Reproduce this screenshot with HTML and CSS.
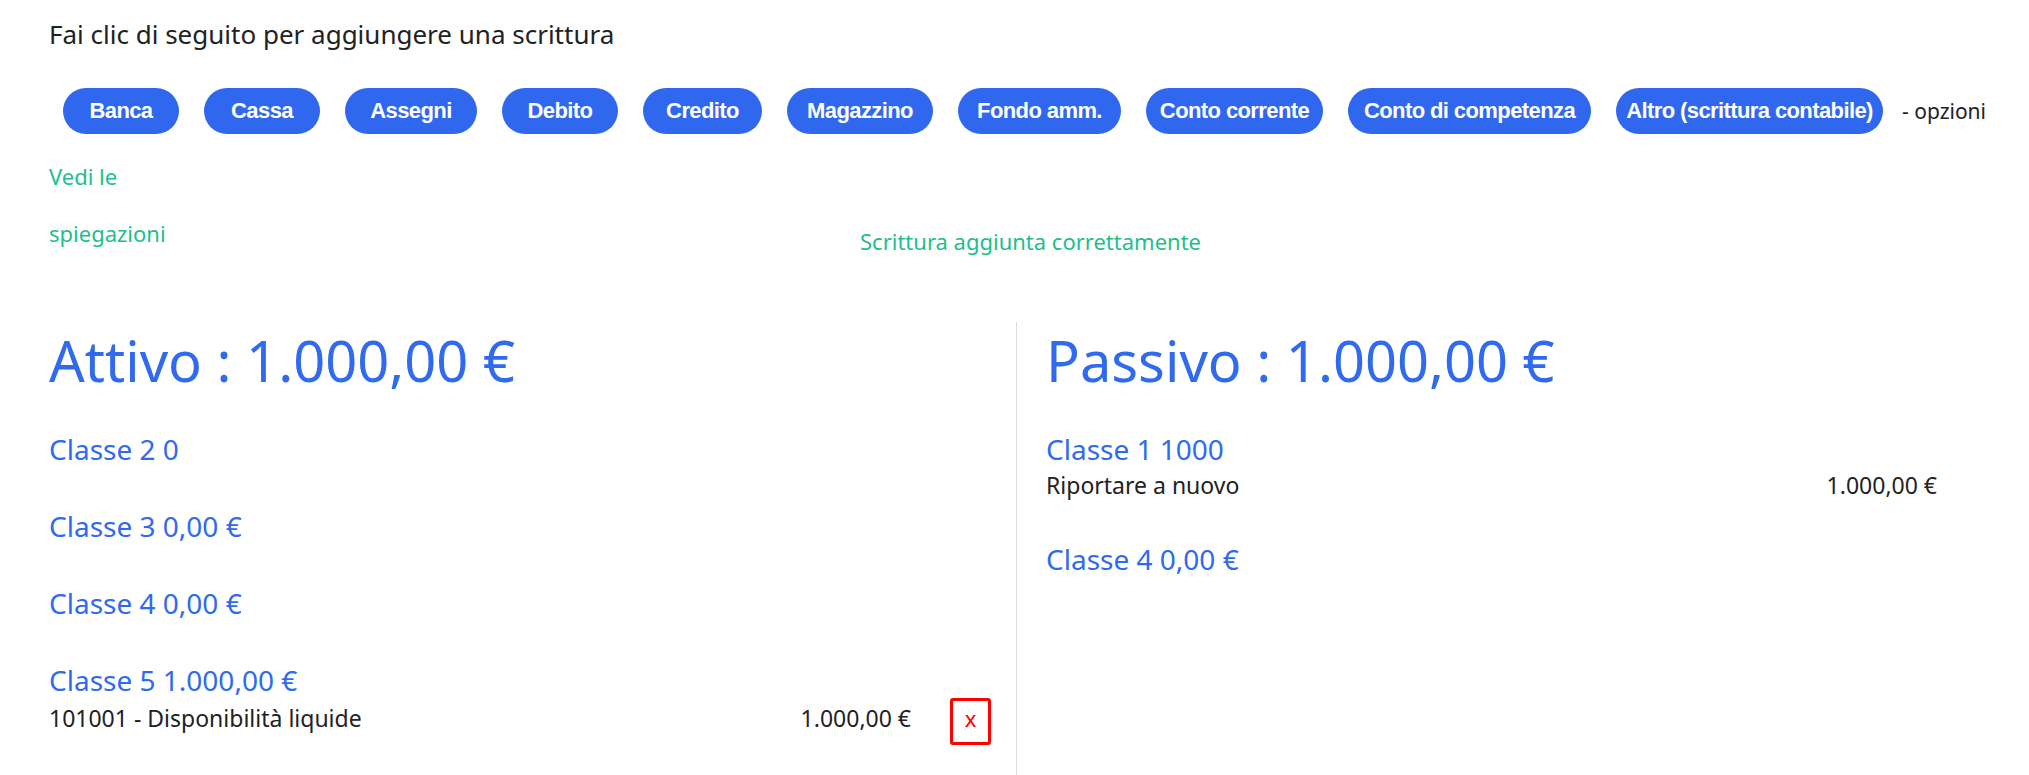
FILE: index.html
```html
<!DOCTYPE html>
<html lang="it">
<head>
<meta charset="utf-8">
<title>Scritture contabili</title>
<link rel="stylesheet" href="styles.css">
</head>
<body>
<div class="page">
  <p class="intro">Fai clic di seguito per aggiungere una scrittura</p>

  <div class="entry-types">
    <button class="entry-btn btn-banca">Banca</button>
    <button class="entry-btn btn-cassa">Cassa</button>
    <button class="entry-btn btn-assegni">Assegni</button>
    <button class="entry-btn btn-debito">Debito</button>
    <button class="entry-btn btn-credito">Credito</button>
    <button class="entry-btn btn-magazzino">Magazzino</button>
    <button class="entry-btn btn-fondo">Fondo amm.</button>
    <button class="entry-btn btn-conto">Conto corrente</button>
    <button class="entry-btn btn-competenza">Conto di competenza</button>
    <button class="entry-btn btn-altro">Altro (scrittura contabile)</button>
    <span class="options">- opzioni</span>
  </div>

  <div class="notice-row">
    <a class="help-link" href="#">Vedi le spiegazioni</a>
    <p class="success">Scrittura aggiunta correttamente</p>
  </div>

  <div class="balance">
    <section class="side side-assets">
      <h2 class="side-title">Attivo : 1.000,00 €</h2>
      <div class="class-block">
        <h4 class="class-title">Classe 2 0</h4>
      </div>
      <div class="class-block">
        <h4 class="class-title">Classe 3 0,00 €</h4>
      </div>
      <div class="class-block">
        <h4 class="class-title">Classe 4 0,00 €</h4>
      </div>
      <div class="class-block">
        <h4 class="class-title">Classe 5 1.000,00 €</h4>
        <div class="line">
          <span class="line-name">101001 - Disponibilità liquide</span>
          <span class="line-amount">1.000,00 €</span>
          <button class="remove-btn">x</button>
        </div>
      </div>
    </section>

    <section class="side side-liabilities">
      <h2 class="side-title">Passivo : 1.000,00 €</h2>
      <div class="class-block">
        <h4 class="class-title">Classe 1 1000</h4>
        <div class="line">
          <span class="line-name">Riportare a nuovo</span>
          <span class="line-amount">1.000,00 €</span>
        </div>
      </div>
      <div class="class-block">
        <h4 class="class-title">Classe 4 0,00 €</h4>
      </div>
    </section>
  </div>
</div>
</body>
</html>
```

FILE: styles.css
```css
html, body {
  margin: 0;
  padding: 0;
  background: #ffffff;
}

body {
  font-family: "Noto Sans", "Open Sans", sans-serif;
  color: #222222;
  overflow: hidden;
}

.page {
  padding: 17px 0 0 49px;
}

.intro {
  margin: 0;
  font-size: 26px;
  line-height: 34px;
  color: #222222;
}

/* entry type buttons */
.entry-types {
  display: flex;
  align-items: center;
  gap: 25px;
  margin-top: 37px;
  padding-left: 14px;
}

.entry-btn {
  flex: none;
  display: inline-flex;
  align-items: center;
  justify-content: center;
  height: 46px;
  padding: 0;
  border: none;
  border-radius: 23px;
  background: #2f68ef;
  color: #ffffff;
  font-family: "Liberation Sans", Arial, sans-serif;
  font-weight: bold;
  font-size: 22px;
  letter-spacing: -0.6px;
  white-space: nowrap;
  cursor: pointer;
}

.btn-banca { width: 116px; }
.btn-cassa { width: 116px; }
.btn-assegni { width: 132px; }
.btn-debito { width: 116px; }
.btn-credito { width: 119px; }
.btn-magazzino { width: 146px; }
.btn-fondo { width: 163px; }
.btn-conto { width: 177px; }
.btn-competenza { width: 243px; }
.btn-altro { width: 267px; }

.options {
  margin-left: -6px;
  font-size: 21px;
  color: #222222;
  white-space: nowrap;
}

/* notice row */
.notice-row {
  display: flex;
  align-items: flex-end;
  margin-top: 14px;
}

.help-link {
  flex: none;
  width: 130px;
  font-size: 22px;
  line-height: 57px;
  color: #1ebe8c;
  text-decoration: none;
}

.success {
  margin: 0 0 6px 681px;
  font-size: 22px;
  line-height: 30px;
  color: #1ebe8c;
  white-space: nowrap;
}

/* balance sheet */
.balance {
  display: flex;
  margin-top: 60px;
  min-height: 453px;
}

.side {
  box-sizing: border-box;
}

.side-assets {
  flex: none;
  width: 967px;
  padding-right: 25px;
}

.side-liabilities {
  flex: 1;
  border-left: 1px solid #dcdcdc;
  padding-left: 29px;
  padding-right: 92px;
}

.side-title {
  margin: 5px 0 39px;
  font-size: 56px;
  line-height: 66px;
  font-weight: normal;
  color: #2f6aef;
  white-space: nowrap;
}

.class-block {
  margin-bottom: 42px;
}

.class-block:last-child {
  margin-bottom: 0;
}

.class-title {
  margin: 0;
  font-size: 28px;
  line-height: 35px;
  font-weight: normal;
  color: #2f6aef;
}

.line {
  display: flex;
  align-items: baseline;
}

.line-name,
.line-amount {
  padding-top: 3px;
  font-size: 23px;
  line-height: 30px;
  color: #222222;
  white-space: nowrap;
}

.line-name {
  flex: 1;
}

.remove-btn {
  flex: none;
  box-sizing: border-box;
  display: inline-flex;
  align-items: center;
  justify-content: center;
  width: 41px;
  height: 47px;
  margin-left: 39px;
  padding: 0 0 8px;
  border: 3px solid #ff0000;
  border-radius: 3px;
  background: #ffffff;
  color: #ff0000;
  font-family: "Noto Sans", sans-serif;
  font-size: 22px;
  line-height: 1;
  cursor: pointer;
}
```
